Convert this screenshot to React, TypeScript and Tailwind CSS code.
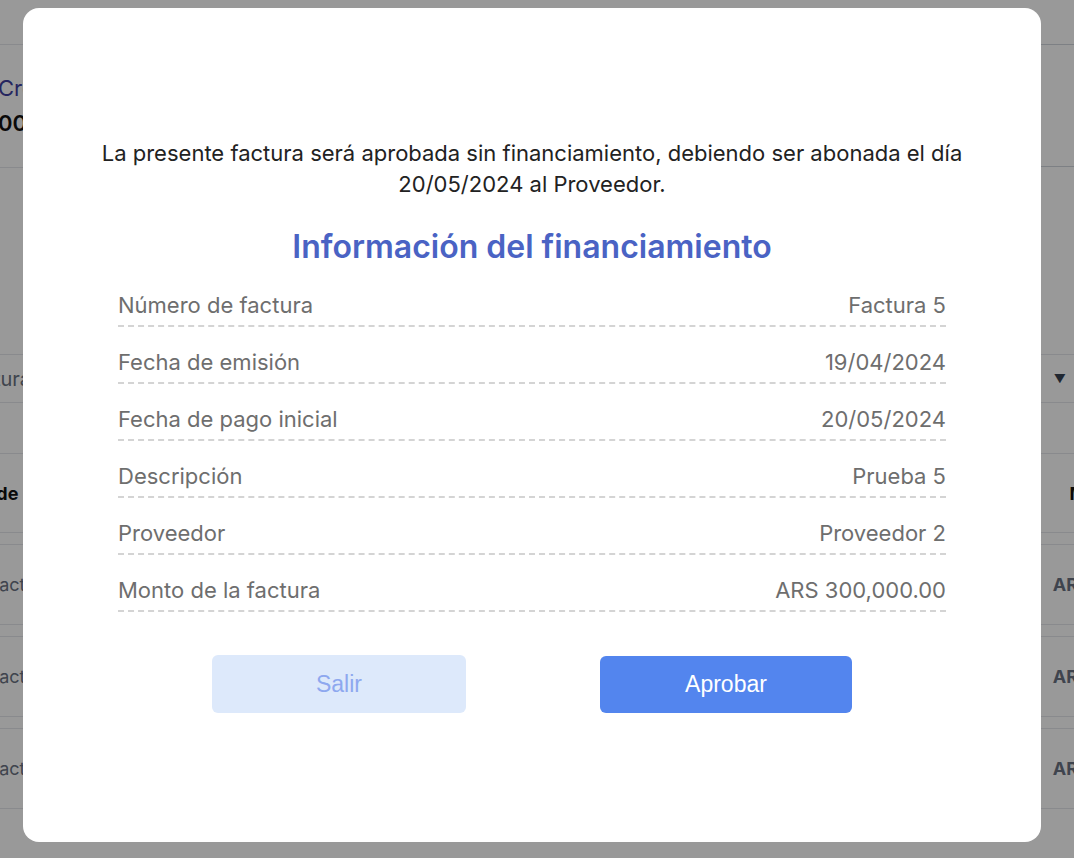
import React from 'react';

const rows: [string, string][] = [
  ['Número de factura', 'Factura 5'],
  ['Fecha de emisión', '19/04/2024'],
  ['Fecha de pago inicial', '20/05/2024'],
  ['Descripción', 'Prueba 5'],
  ['Proveedor', 'Proveedor 2'],
  ['Monto de la factura', 'ARS 300,000.00'],
];

const tableRows = ['Factura 5', 'Factura 4', 'Factura 3'];

export default function App() {
  return (
    <div className="relative h-[858px] w-full overflow-hidden bg-white font-['Inter','Liberation_Sans',sans-serif]">
      {/* pantalla de fondo */}
      <div className="flex flex-col">
        <div className="h-[44px]" />
        <div className="flex justify-between">
          <div className="-ml-[2px] flex h-[124px] w-[320px] flex-col justify-center gap-[2px] border-y border-gray-200 text-[22px]">
            <span className="text-[#3f3f9f]">Crédito</span>
            <span className="font-semibold text-[#111]">000.000</span>
          </div>
          <div className="mr-[-40px] flex h-[123px] w-[160px] flex-col justify-center gap-[2px] rounded-xl border border-gray-300 pl-[8px] text-[22px]">
            <span className="text-[#3f3f9f]">Límite</span>
            <span className="font-semibold text-[#111]">ARS 0</span>
          </div>
        </div>

        <div className="mt-[186px] flex h-[49px] items-center justify-between border-y border-gray-200 text-[20px] text-gray-500">
          <span className="-ml-[40px]">Factura</span>
          <span className="mr-[8px] text-[12px] text-gray-700">▼</span>
        </div>

        <div className="mt-[50px] flex h-[80px] items-center justify-between border-y border-gray-200 text-[18px] font-bold text-[#111]">
          <span className="-ml-[61px]">Fecha de</span>
          <span className="mr-[-52px]">Monto</span>
        </div>

        {tableRows.map((r) => (
          <div
            key={r}
            className="mt-[11px] flex h-[81px] items-center justify-between border-y border-gray-200 text-[18px] text-gray-500"
          >
            <span className="-ml-[11px]">{r}</span>
            <span className="mr-[-56px] font-bold">ARS 300</span>
          </div>
        ))}
      </div>

      {/* overlay + modal */}
      <div className="absolute inset-0 bg-black/40 pl-[23px] pt-[8px]">
        <div className="flex h-[834px] w-[1018px] flex-col items-center rounded-2xl bg-white px-[95px] pt-[130px]">
          <p className="w-[900px] text-center text-[22px] leading-[31px] text-[#222]">
            La presente factura será aprobada sin financiamiento, debiendo ser abonada el día 20/05/2024 al Proveedor.
          </p>
          <h2 className="mt-[27px] text-[32px] font-semibold leading-[40px] text-[#4a63c4]">
            Información del financiamiento
          </h2>

          <div className="mt-[24px] flex w-full flex-col gap-[21px]">
            {rows.map(([label, value]) => (
              <div
                key={label}
                className="flex items-center justify-between border-b-2 border-dashed border-[#d4d4d4] pb-[6px] text-[22px] leading-[28px] text-[#6e6e6e]"
              >
                <span>{label}</span>
                <span>{value}</span>
              </div>
            ))}
          </div>

          <div className="mt-[43px] flex items-center gap-[134px] font-['Liberation_Sans',Arial,sans-serif] text-[23px]">
            <button className="h-[58px] w-[254px] rounded-md bg-[#dde9fb] text-[#8ea8ef]">Salir</button>
            <button className="h-[57px] w-[252px] rounded-md bg-[#5385ee] text-white">Aprobar</button>
          </div>
        </div>
      </div>
    </div>
  );
}
